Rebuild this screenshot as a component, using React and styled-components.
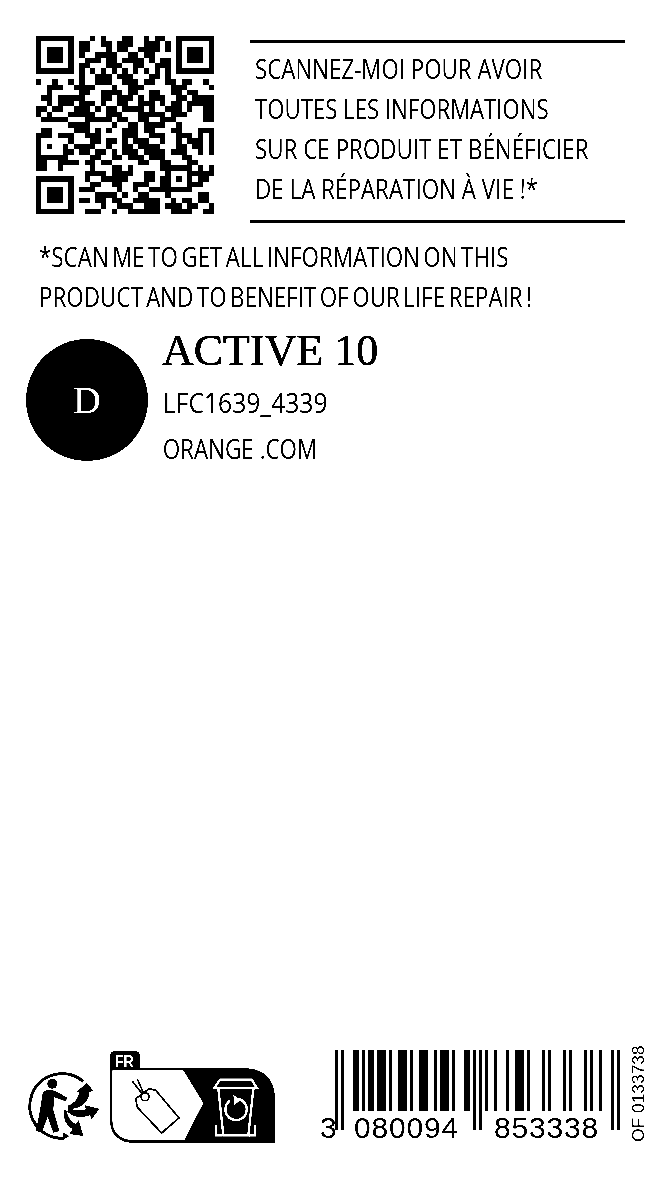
import styled, { createGlobalStyle } from "styled-components"

const GlobalStyle = createGlobalStyle`
  html, body {
    margin: 0;
    padding: 0;
    background: #fff;
  }
`

const QR_ROWS = [
  "111111100010100011001011001111111",
  "100000101100110111001110101000001",
  "101110101100010110011110101011101",
  "101110101001111001101100001011101",
  "101110100111011011110101101011101",
  "100000101100011100110011101000001",
  "111111101010101010101010101111111",
  "000000001001110111000110100000000",
  "100100101001110011101100110110010",
  "001110011110001001110000011100001",
  "001000001100111101100110011011000",
  "011011111000110111010111001101111",
  "001011101110100110011101011011111",
  "110110011101011011110100111010011",
  "101000111110011100011111011100011",
  "011111000111110110011001110000011",
  "000000111100001001101111001000000",
  "011000011101010011101100011000111",
  "111011100111000011100111001110101",
  "100000100011011010111001001011101",
  "101001011110010011011110001101101",
  "100001101101101011101111011100101",
  "111111000011001101110111000110000",
  "110011110110110000011001100011000",
  "110010000010001101000001111110101",
  "000000000111101111001100100011111",
  "111111100100111110001101101010110",
  "100000100011001100111001100011100",
  "101110101110000100100111111110000",
  "101110100001111010011000100000110",
  "101110101101101100111110010110110",
  "100000100000100111001110111011001",
  "111111100111001001111110011110011",
]

const qrPath = QR_ROWS.map((row, y) =>
  row.split("").map((cell, x) => (cell === "1" ? `M${x} ${y}h1v1h-1z` : "")).join("")
).join("")

const EAN_L = ["0001101", "0011001", "0010011", "0111101", "0100011", "0110001", "0101111", "0111011", "0110111", "0001011"]
const EAN_R = EAN_L.map((c) => c.split("").map((b) => (b === "1" ? "0" : "1")).join(""))
const EAN_G = EAN_R.map((c) => c.split("").reverse().join(""))

// first digit 3 => LLGGGL
function eanBars(left, right) {
  const parity = "LLGGGL"
  const leftBits = left.split("").map((d, i) => (parity[i] === "L" ? EAN_L[d] : EAN_G[d])).join("")
  const rightBits = right.split("").map((d) => EAN_R[d]).join("")
  return "101" + leftBits + "01010" + rightBits + "101"
}

const allBits = eanBars("080094", "853338")

export default function App() {
  return (
    <Page>
      <GlobalStyle />
      <div>
        <TopRow>
          <QrCode viewBox="0 0 33 33" shapeRendering="crispEdges">
            <path d={qrPath} fill="#000" />
          </QrCode>
          <ScanPanel>
            <Line $squeeze={0.797}>SCANNEZ-MOI POUR AVOIR</Line>
            <Line $squeeze={0.792}>TOUTES LES INFORMATIONS</Line>
            <Line $squeeze={0.8}>SUR CE PRODUIT ET BÉNÉFICIER</Line>
            <Line $squeeze={0.8}>DE LA RÉPARATION À VIE !*</Line>
          </ScanPanel>
        </TopRow>
        <English>
          <Line $squeeze={0.8}>*SCAN ME TO GET ALL INFORMATION ON THIS</Line>
          <Line $squeeze={0.8}>PRODUCT AND TO BENEFIT OF OUR LIFE REPAIR !</Line>
        </English>
        <ProductRow>
          <Badge>D</Badge>
          <ProductInfo>
            <ProductName>ACTIVE 10</ProductName>
            <ProductLine $squeeze={0.88}>LFC1639_4339</ProductLine>
            <ProductLine $squeeze={0.8}>ORANGE .COM</ProductLine>
          </ProductInfo>
        </ProductRow>
      </div>
      <Footer>
        <Triman viewBox="15 15 225 240">
          <path d="M190 65 A 97 97 0 1 0 125 235" fill="none" stroke="#000" strokeWidth="9" />
          <path d="M122 230 L130 230 L130 218 L148 228 L130 239 L122 239 Z" fill="#000" />
          <circle cx="97" cy="71" r="15" fill="#000" />
          <path d="M68 100 Q72 90 90 90 L105 92 L142 113 L137 124 L102 112 L100 150 L118 213 L100 218 L83 170 L65 218 L48 212 L60 150 Z" fill="#000" />
          <path d="M142 138 Q172 128 178 96 L170 96 L200 68 L220 92 L208 96 Q205 142 148 148 Z" fill="#000" />
          <path d="M145 145 Q175 155 198 148 L194 136 L238 146 L215 178 L210 166 Q170 180 142 155 Z" fill="#000" />
          <path d="M138 148 Q146 185 168 192 L176 180 L190 228 L148 222 L158 208 Q128 190 132 152 Z" fill="#000" />
        </Triman>
        <SortLabel viewBox="0 0 525 300">
          <path d="M15 25 Q15 10 30 10 L90 10 Q105 10 105 25 L105 60 L420 60 Q510 65 510 155 L510 285 L95 285 Q15 285 15 215 Z" fill="#000" />
          <path d="M22 67 L235 67 L295 165 L238 277 L95 277 Q22 277 22 215 Z" fill="#fff" />
          <FrText x="30" y="58" textLength="56" lengthAdjust="spacingAndGlyphs">FR</FrText>
          <g fill="none" stroke="#000" strokeWidth="5">
            <path d="M92 152 L133 122 L152 127 L222 210 L170 255 L97 178 Z" />
            <circle cx="120" cy="146" r="12" />
            <path d="M82 100 L112 138 M97 93 L114 132" />
          </g>
          <g fill="none" stroke="#fff" strokeWidth="7">
            <path d="M328 120 L345 95 L440 95 L456 120 Z" />
            <path d="M340 122 L355 262 L430 262 L445 122" />
            <path d="M333 232 L333 262 L352 262 M450 232 L450 262 L432 262" />
            <path d="M375 158 A 32 32 0 1 0 400 153" />
          </g>
          <path d="M385 140 L407 155 L388 172 Z" fill="#fff" />
        </SortLabel>
        <Barcode>
          <Bars viewBox="0 0 95 80" preserveAspectRatio="none" shapeRendering="crispEdges">
            {allBits.split("").map((bit, i) => {
              if (bit !== "1") return null
              const guard = i < 3 || (i >= 45 && i < 50) || i >= 92
              return <rect key={i} x={i} y="0" width="1" height={guard ? 80 : 61} fill="#000" />
            })}
          </Bars>
          <Digits $left={0}>3</Digits>
          <Digits $left={34}>080094</Digits>
          <Digits $left={174}>853338</Digits>
        </Barcode>
        <SideCode>OF 0133738</SideCode>
      </Footer>
    </Page>
  )
}

const Page = styled.div`
  width: 660px;
  height: 1200px;
  display: flex;
  flex-direction: column;
  justify-content: space-between;
  background: #fff;
  color: #000;
  overflow: hidden;
  filter: grayscale(1) contrast(8);
`

const TopRow = styled.div`
  display: flex;
  padding: 36px 35px 0 36px;
  gap: 36px;
  align-items: flex-start;
`

const QrCode = styled.svg`
  width: 178px;
  height: 178px;
  flex: none;
`

const ScanPanel = styled.div`
  flex: none;
  width: 375px;
  box-sizing: border-box;
  margin-top: 4px;
  padding: 5px 0 12px 5px;
  border-top: 3px solid #000;
  border-bottom: 3px solid #000;
  font-family: "Open Sans", sans-serif;
  font-size: 28px;
  line-height: 40px;
`

const Line = styled.div`
  white-space: nowrap;
  transform: scaleX(${(props) => props.$squeeze});
  transform-origin: left center;
`

const English = styled.div`
  padding: 13px 0 0 39px;
  font-family: "Open Sans", sans-serif;
  font-size: 28px;
  line-height: 40px;
  word-spacing: -3px;
`

const ProductRow = styled.div`
  display: flex;
  gap: 14px;
  padding: 0 0 0 26px;
  margin-top: 23px;
  align-items: flex-start;
`

const Badge = styled.div`
  width: 122px;
  height: 122px;
  flex: none;
  border-radius: 50%;
  background: #000;
  color: #fff;
  display: flex;
  align-items: center;
  justify-content: center;
  font-family: "Liberation Serif", serif;
  font-size: 38px;
`

const ProductInfo = styled.div`
  display: flex;
  flex-direction: column;
`

const ProductName = styled.div`
  font-family: "Liberation Serif", serif;
  font-size: 44px;
  line-height: 30px;
  margin-top: -3px;
  padding-bottom: 13px;
  -webkit-text-stroke: 0.5px #000;
`

const ProductLine = styled.div`
  font-family: "Open Sans", sans-serif;
  font-size: 28px;
  line-height: 46px;
  padding-left: 1px;
  white-space: nowrap;
  transform: scaleX(${(props) => props.$squeeze});
  transform-origin: left center;
`

const Footer = styled.div`
  display: flex;
  align-items: flex-start;
  padding: 0 0 52px 25px;
`

const Triman = styled.svg`
  width: 75px;
  height: 80px;
  margin-top: 17px;
  flex: none;
`

const SortLabel = styled.svg`
  width: 175px;
  height: 100px;
  margin-left: 5px;
  flex: none;
`

const FrText = styled.text`
  font-family: "Liberation Sans", sans-serif;
  font-weight: 700;
  font-size: 50px;
  fill: #fff;
`

const Barcode = styled.div`
  position: relative;
  width: 300px;
  height: 92px;
  margin: 2px 0 0 40px;
  padding-left: 15px;
  box-sizing: border-box;
  flex: none;
`

const Bars = styled.svg`
  display: block;
  width: 285px;
  height: 80px;
`

const Digits = styled.span`
  position: absolute;
  left: ${(props) => props.$left}px;
  top: 61px;
  font-family: "Liberation Sans", sans-serif;
  font-size: 30px;
  line-height: 34px;
  letter-spacing: 0.8px;
`

const SideCode = styled.div`
  writing-mode: vertical-rl;
  transform: rotate(180deg);
  font-family: "Liberation Sans", sans-serif;
  font-size: 17.4px;
  line-height: 18px;
  margin: -3px 0 0 9px;
  height: 97px;
  white-space: nowrap;
`
